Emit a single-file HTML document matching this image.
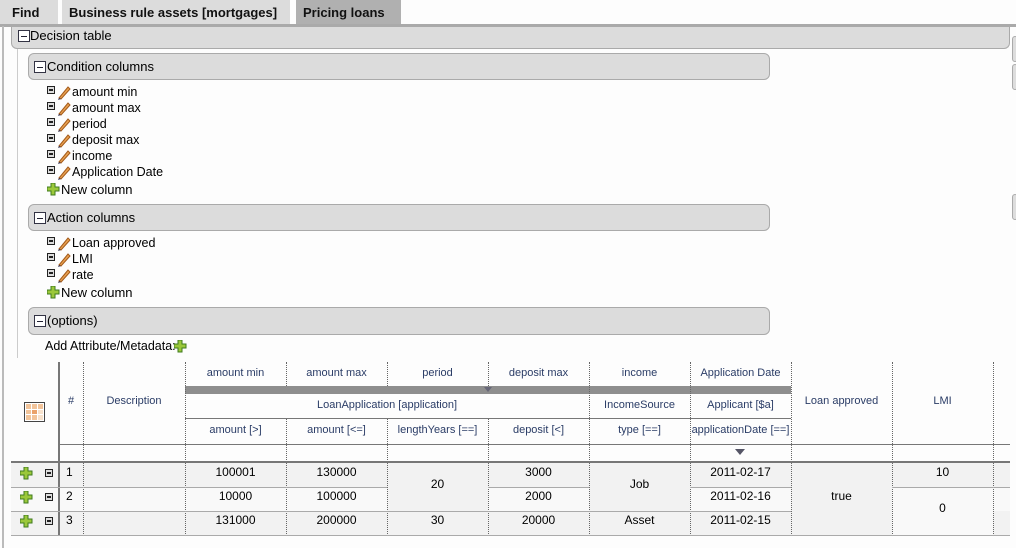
<!DOCTYPE html>
<html><head><meta charset="utf-8"><style>
*{margin:0;padding:0;box-sizing:border-box}
body{width:1016px;height:548px;overflow:hidden;background:#fdfdfd;font-family:"Liberation Sans",sans-serif;font-size:12px;color:#000;position:relative}
.a{position:absolute}
.tab{position:absolute;top:0;height:25px;background:#dcdcdc;font-weight:bold;font-size:13px;line-height:25px;padding-left:12px;color:#111}
.bar{position:absolute;background:#dcdcdc;border:1px solid #aaa;border-top:none;border-radius:0 0 6px 6px;font-size:13px;line-height:24px;padding-left:18px}
.box{position:absolute;background:#dcdcdc;border:1px solid #aaa;border-radius:6px;font-size:13px;line-height:26px;padding-left:18px}
.mx{position:absolute;left:5px;top:7px;width:12px;height:12px;border:1px solid #334;background:#fff}
.mx:after{content:"";position:absolute;left:2px;top:5px;width:6px;height:1px;background:#223}
.it{position:absolute;left:47px;height:16px;font-size:12.5px;line-height:16px}
.sm{position:absolute;left:0;top:2px;width:8px;height:8px;background:#ddd;border:1px solid #222}
.sm:after{content:"";position:absolute;left:1px;top:2px;width:4px;height:2px;background:#222}
.it span{position:absolute;left:25px;white-space:nowrap}
.it svg{position:absolute;left:10px;top:1px}
.h{position:absolute;color:#2a3c66;font-size:11px;text-align:center;line-height:14px}
.d{position:absolute;font-size:12px;text-align:center;line-height:14px}
.vd{position:absolute;top:362px;height:174px;border-left:1px dotted #666}
.hl{position:absolute;height:1px;background:#aaa}
.cv{position:absolute;background:#f2f2f2}
</style></head><body>
<div class="tab" style="left:0;width:58px">Find</div>
<div class="tab" style="left:62px;width:228px;padding-left:7px">Business rule assets [mortgages]</div>
<div class="tab" style="left:296px;width:105px;background:#b0b0b0;padding-left:7px">Pricing loans</div>
<div class="a" style="left:0;top:24px;width:1016px;height:3px;background:#aaa"></div>
<div class="a" style="left:2px;top:26px;width:2px;height:522px;background:#bbb"></div>
<div class="a" style="left:17px;top:48px;width:1px;height:310px;background:#ccc"></div>
<div class="a" style="left:1012px;top:36px;width:6px;height:26px;border:1px solid #aaa;border-radius:5px;background:#ddd"></div>
<div class="a" style="left:1012px;top:64px;width:6px;height:26px;border:1px solid #aaa;border-radius:5px;background:#ddd"></div>
<div class="a" style="left:1012px;top:194px;width:6px;height:26px;border:1px solid #aaa;border-radius:5px;background:#ddd"></div>

<div class="bar" style="left:11px;top:27px;width:999px;height:22px;line-height:18px"><div class="mx" style="left:6px;top:3px"></div>Decision table</div>

<div class="box" style="left:28px;top:53px;width:742px;height:27px"><div class="mx"></div>Condition columns</div>
<div class="box" style="left:28px;top:204px;width:742px;height:27px"><div class="mx"></div>Action columns</div>
<div class="box" style="left:28px;top:307px;width:742px;height:28px"><div class="mx"></div>(options)</div>

<svg width="0" height="0" style="position:absolute"><defs>
<g id="pen"><path d="M2 13 L11 2 L13 4 L4 14 Z" fill="#e8a050" stroke="#a35a1a" stroke-width="1"/><path d="M2 13 L1 15 L4 14" fill="#335" /></g>
<g id="plus"><path d="M4 0h4v4h4v4h-4v4h-4v-4h-4v-4h4z" fill="#9bc83a" stroke="#3f7a1e" stroke-width="1"/></g>
</defs></svg>

<div class="it" style="top:84px"><i class="sm"></i><svg width="15" height="16"><use href="#pen"/></svg><span>amount min</span></div>
<div class="it" style="top:100px"><i class="sm"></i><svg width="15" height="16"><use href="#pen"/></svg><span>amount max</span></div>
<div class="it" style="top:116px"><i class="sm"></i><svg width="15" height="16"><use href="#pen"/></svg><span>period</span></div>
<div class="it" style="top:132px"><i class="sm"></i><svg width="15" height="16"><use href="#pen"/></svg><span>deposit max</span></div>
<div class="it" style="top:148px"><i class="sm"></i><svg width="15" height="16"><use href="#pen"/></svg><span>income</span></div>
<div class="it" style="top:164px"><i class="sm"></i><svg width="15" height="16"><use href="#pen"/></svg><span>Application Date</span></div>
<div class="it" style="top:182px"><svg width="13" height="13" style="left:0;top:1px"><use href="#plus"/></svg><span style="left:14px;font-size:13px">New column</span></div>
<div class="it" style="top:235px"><i class="sm"></i><svg width="15" height="16"><use href="#pen"/></svg><span>Loan approved</span></div>
<div class="it" style="top:251px"><i class="sm"></i><svg width="15" height="16"><use href="#pen"/></svg><span>LMI</span></div>
<div class="it" style="top:267px"><i class="sm"></i><svg width="15" height="16"><use href="#pen"/></svg><span>rate</span></div>
<div class="it" style="top:285px"><svg width="13" height="13" style="left:0;top:1px"><use href="#plus"/></svg><span style="left:14px;font-size:13px">New column</span></div>
<div class="a" style="left:45px;top:339px;font-size:12.5px">Add Attribute/Metadata:</div>
<svg class="a" style="left:174px;top:340px" width="13" height="13"><use href="#plus"/></svg>

<!-- table -->
<div class="a" style="left:11px;top:463px;width:999px;height:24px;background:#f2f2f2"></div>
<div class="a" style="left:11px;top:487px;width:999px;height:24px;background:#f9f9f9"></div>
<div class="a" style="left:11px;top:511px;width:999px;height:24px;background:#f2f2f2"></div>
<div class="cv" style="left:387px;top:463px;width:101px;height:48px"></div>
<div class="cv" style="left:589px;top:463px;width:101px;height:48px"></div>
<div class="cv" style="left:791px;top:463px;width:101px;height:72px"></div>
<div class="cv" style="left:892px;top:488px;width:101px;height:47px;background:#f9f9f9"></div>
<div class="a" style="left:185px;top:386px;width:606px;height:8px;background:#8e8e8e"></div>
<div class="a" style="left:484px;top:387px;width:0;height:0;border-left:4px solid transparent;border-right:4px solid transparent;border-top:5px solid #667"></div>
<div class="a" style="left:58px;top:362px;width:2px;height:174px;background:#777"></div>
<div class="vd" style="left:83px"></div>
<div class="vd" style="left:185px"></div>
<div class="vd" style="left:286px;top:362px;height:24px"></div>
<div class="vd" style="left:286px;top:419px;height:117px"></div>
<div class="vd" style="left:387px;top:362px;height:24px"></div>
<div class="vd" style="left:387px;top:419px;height:117px"></div>
<div class="vd" style="left:488px;top:362px;height:24px"></div>
<div class="vd" style="left:488px;top:419px;height:117px"></div>
<div class="vd" style="left:589px"></div>
<div class="vd" style="left:690px"></div>
<div class="vd" style="left:791px"></div>
<div class="vd" style="left:892px"></div>
<div class="vd" style="left:993px"></div>
<div class="a" style="left:185px;top:418px;width:606px;height:1px;background:#777"></div>
<div class="a" style="left:58px;top:444px;width:952px;height:1px;background:#777"></div>
<div class="a" style="left:11px;top:461px;width:999px;height:2px;background:#777"></div>
<div class="hl" style="left:11px;top:487px;width:376px"></div>
<div class="hl" style="left:488px;top:487px;width:101px"></div>
<div class="hl" style="left:690px;top:487px;width:101px"></div>
<div class="hl" style="left:892px;top:487px;width:118px"></div>
<div class="hl" style="left:11px;top:511px;width:780px"></div>
<div class="hl" style="left:11px;top:535px;width:999px"></div>

<svg class="a" style="left:24px;top:402px" width="21" height="20"><rect x="0.5" y="0.5" width="20" height="19" fill="#fff" stroke="#444"/><g fill="#f2c49a"><rect x="2" y="2" width="5" height="5"/><rect x="8" y="2" width="5" height="5"/><rect x="14" y="2" width="5" height="5"/><rect x="2" y="8" width="5" height="4"/><rect x="8" y="8" width="5" height="4" fill="#eaa26a"/><rect x="14" y="8" width="5" height="4" fill="#f8e2cc"/><rect x="2" y="13" width="5" height="5"/><rect x="8" y="13" width="5" height="5"/><rect x="14" y="13" width="5" height="5" fill="#f8e2cc"/></g></svg>

<div class="h" style="left:58px;width:26px;top:394px">#</div>
<div class="h" style="left:83px;width:102px;top:394px">Description</div>
<div class="h" style="left:185px;width:101px;top:366px">amount min</div>
<div class="h" style="left:286px;width:101px;top:366px">amount max</div>
<div class="h" style="left:387px;width:101px;top:366px">period</div>
<div class="h" style="left:488px;width:101px;top:366px">deposit max</div>
<div class="h" style="left:589px;width:101px;top:366px">income</div>
<div class="h" style="left:690px;width:101px;top:366px">Application Date</div>
<div class="h" style="left:185px;width:404px;top:398px">LoanApplication [application]</div>
<div class="h" style="left:589px;width:101px;top:398px">IncomeSource</div>
<div class="h" style="left:690px;width:101px;top:398px">Applicant [$a]</div>
<div class="h" style="left:185px;width:101px;top:423px">amount [&gt;]</div>
<div class="h" style="left:286px;width:101px;top:423px">amount [&lt;=]</div>
<div class="h" style="left:387px;width:101px;top:423px">lengthYears [==]</div>
<div class="h" style="left:488px;width:101px;top:423px">deposit [&lt;]</div>
<div class="h" style="left:589px;width:101px;top:423px">type [==]</div>
<div class="h" style="left:690px;width:101px;top:423px">applicationDate [==]</div>
<div class="h" style="left:791px;width:101px;top:394px">Loan approved</div>
<div class="h" style="left:892px;width:101px;top:394px">LMI</div>
<div class="a" style="left:735px;top:449px;border-left:5px solid transparent;border-right:5px solid transparent;border-top:6px solid #556"></div>

<svg class="a" style="left:20px;top:467px" width="13" height="13"><use href="#plus"/></svg>
<svg class="a" style="left:20px;top:491px" width="13" height="13"><use href="#plus"/></svg>
<svg class="a" style="left:20px;top:515px" width="13" height="13"><use href="#plus"/></svg>
<i class="sm" style="left:45px;top:469px"></i>
<i class="sm" style="left:45px;top:493px"></i>
<i class="sm" style="left:45px;top:517px"></i>

<div class="d" style="left:58px;width:26px;top:465px;text-align:left;padding-left:8px">1</div>
<div class="d" style="left:58px;width:26px;top:489px;text-align:left;padding-left:8px">2</div>
<div class="d" style="left:58px;width:26px;top:513px;text-align:left;padding-left:8px">3</div>
<div class="d" style="left:185px;width:101px;top:465px">100001</div>
<div class="d" style="left:185px;width:101px;top:489px">10000</div>
<div class="d" style="left:185px;width:101px;top:513px">131000</div>
<div class="d" style="left:286px;width:101px;top:465px">130000</div>
<div class="d" style="left:286px;width:101px;top:489px">100000</div>
<div class="d" style="left:286px;width:101px;top:513px">200000</div>
<div class="d" style="left:387px;width:101px;top:477px">20</div>
<div class="d" style="left:387px;width:101px;top:513px">30</div>
<div class="d" style="left:488px;width:101px;top:465px">3000</div>
<div class="d" style="left:488px;width:101px;top:489px">2000</div>
<div class="d" style="left:488px;width:101px;top:513px">20000</div>
<div class="d" style="left:589px;width:101px;top:477px">Job</div>
<div class="d" style="left:589px;width:101px;top:513px">Asset</div>
<div class="d" style="left:690px;width:101px;top:465px">2011-02-17</div>
<div class="d" style="left:690px;width:101px;top:489px">2011-02-16</div>
<div class="d" style="left:690px;width:101px;top:513px">2011-02-15</div>
<div class="d" style="left:791px;width:101px;top:489px">true</div>
<div class="d" style="left:892px;width:101px;top:465px">10</div>
<div class="d" style="left:892px;width:101px;top:501px">0</div>
</body></html>
